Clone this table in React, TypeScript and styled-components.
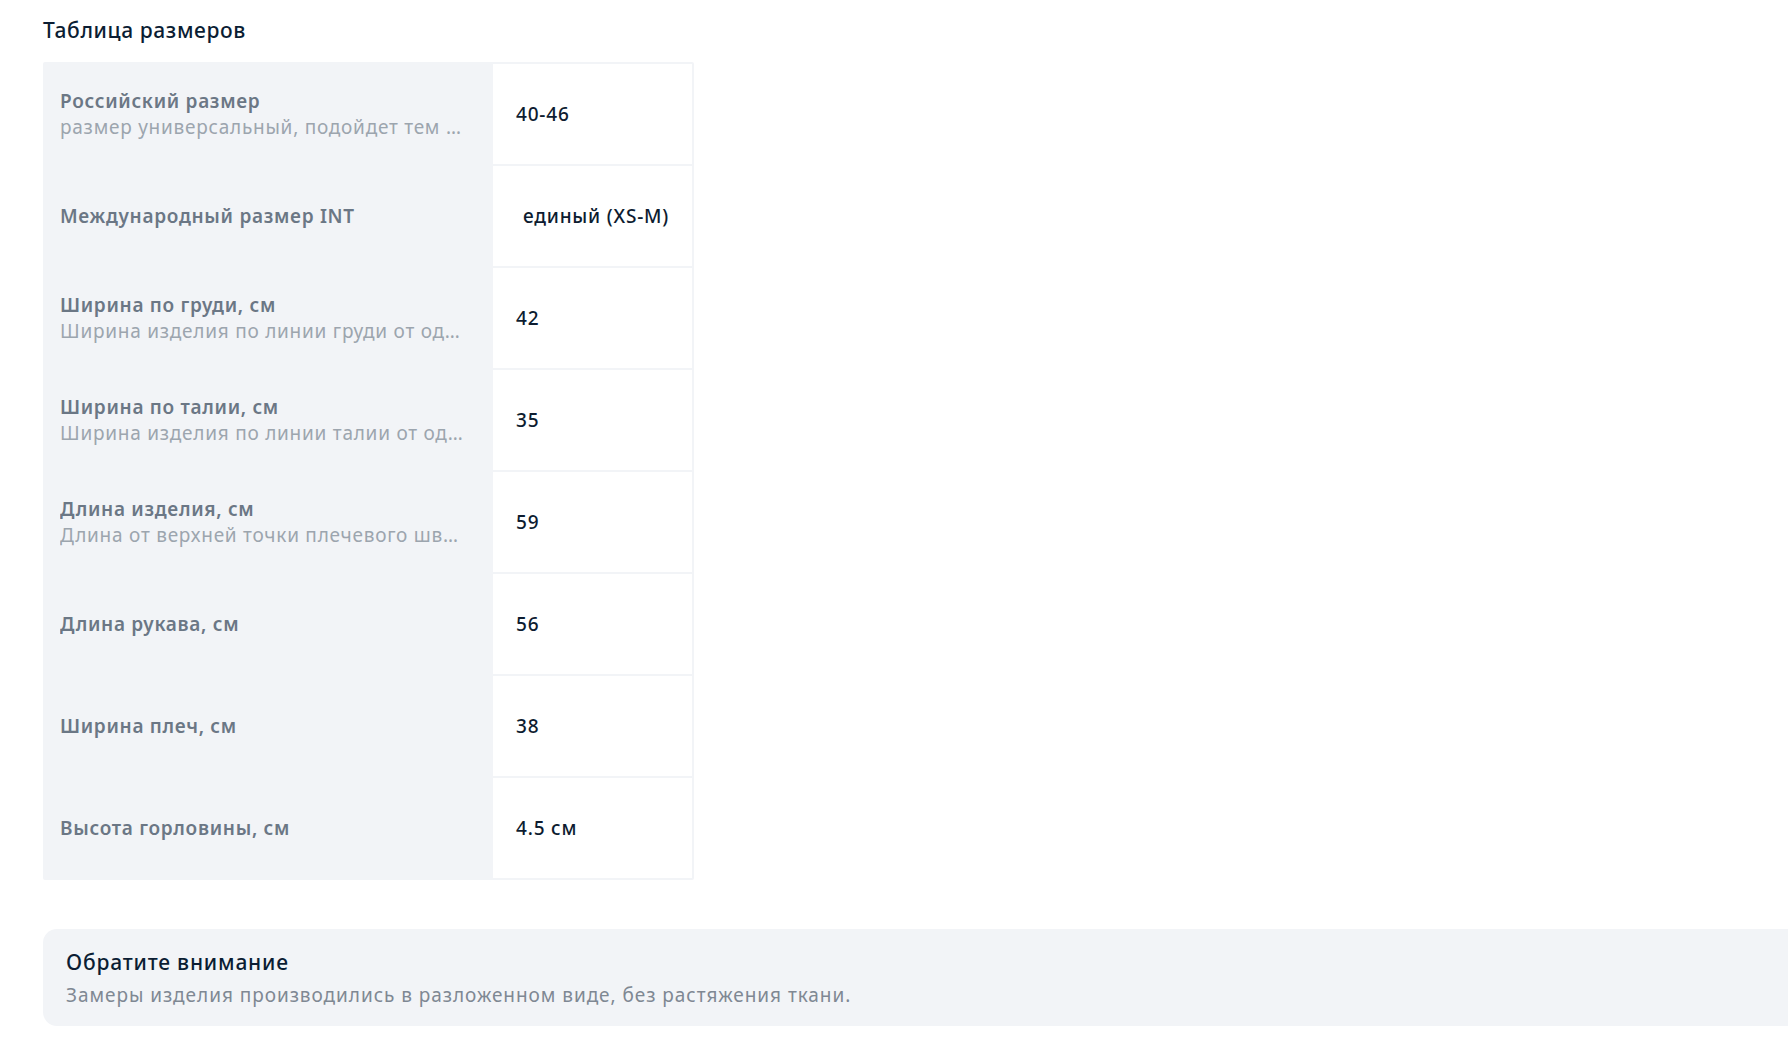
import React from "react";
import styled, { createGlobalStyle } from "styled-components";

const GlobalStyle = createGlobalStyle`
  html, body {
    margin: 0;
    padding: 0;
    background: #ffffff;
    font-family: "Noto Sans", "Open Sans", Arial, sans-serif;
    -webkit-font-smoothing: antialiased;
  }
  body { overflow: hidden; }
`;

const Page = styled.div`
  padding: 14px 0 0 43px;
  width: 1788px;
  box-sizing: border-box;
`;

const Title = styled.h2`
  margin: 0 0 16px;
  font-size: 21px;
  line-height: 32px;
  font-weight: 500;
  color: #0b1d33;
  letter-spacing: 0.6px;
`;

const Table = styled.div`
  display: grid;
  grid-template-columns: 450px 199px;
  grid-auto-rows: 100px;
  row-gap: 2px;
  width: max-content;
  padding: 2px 2px 2px 0;
  background: #f2f4f7;
  border-radius: 2px;
`;

const LabelCell = styled.div`
  display: flex;
  flex-direction: column;
  justify-content: center;
  padding: 0 24px 0 17px;
  background: #f2f4f7;
  min-width: 0;
`;

const LabelTitle = styled.div`
  font-size: 19px;
  line-height: 26px;
  font-weight: 600;
  color: #6b7785;
  letter-spacing: 0.7px;
  white-space: nowrap;
  overflow: hidden;
  text-overflow: ellipsis;
`;

const LabelHint = styled.div`
  font-size: 19px;
  line-height: 26px;
  font-weight: 400;
  color: #9ca5ae;
  white-space: nowrap;
  overflow: hidden;
  text-overflow: ellipsis;
  letter-spacing: 0.75px;
`;

const ValueCell = styled.div<{ $inset?: boolean }>`
  display: flex;
  align-items: center;
  padding-left: ${(p) => (p.$inset ? "30px" : "23px")};
  background: #ffffff;
  font-size: 19px;
  font-weight: 500;
  letter-spacing: 0.8px;
  color: #0d1c30;
  white-space: nowrap;
`;

const Notice = styled.div`
  margin-top: 49px;
  width: calc(1788px - 43px + 20px);
  box-sizing: border-box;
  background: #f2f4f7;
  border-radius: 14px;
  padding: 17px 23px 18px;
`;

const NoticeTitle = styled.div`
  font-size: 21px;
  line-height: 32px;
  font-weight: 500;
  color: #0b1d33;
  letter-spacing: 0.8px;
`;

const NoticeText = styled.div`
  margin-top: 4px;
  font-size: 19px;
  line-height: 26px;
  color: #7f8893;
  letter-spacing: 0.95px;
`;

type Row = { title: string; hint?: string; value: string; inset?: boolean };

const rows: Row[] = [
  {
    title: "Российский размер",
    hint: "размер универсальный, подойдет тем кто носит размеры 40-46",
    value: "40-46",
  },
  { title: "Международный размер INT", value: "единый (XS-M)", inset: true },
  {
    title: "Ширина по груди, см",
    hint: "Ширина изделия по линии груди от одного бокового шва до другого",
    value: "42",
  },
  {
    title: "Ширина по талии, см",
    hint: "Ширина изделия по линии талии от одного бокового шва до другого",
    value: "35",
  },
  {
    title: "Длина изделия, см",
    hint: "Длина от верхней точки плечевого шва до низа изделия",
    value: "59",
  },
  { title: "Длина рукава, см", value: "56" },
  { title: "Ширина плеч, см", value: "38" },
  { title: "Высота горловины, см", value: "4.5 см" },
];

export default function App() {
  return (
    <>
      <GlobalStyle />
      <Page>
        <Title>Таблица размеров</Title>
        <Table>
          {rows.map((r) => (
            <React.Fragment key={r.title}>
              <LabelCell>
                <LabelTitle>{r.title}</LabelTitle>
                {r.hint && <LabelHint>{r.hint}</LabelHint>}
              </LabelCell>
              <ValueCell $inset={r.inset}>{r.value}</ValueCell>
            </React.Fragment>
          ))}
        </Table>
        <Notice>
          <NoticeTitle>Обратите внимание</NoticeTitle>
          <NoticeText>
            Замеры изделия производились в разложенном виде, без растяжения ткани.
          </NoticeText>
        </Notice>
      </Page>
    </>
  );
}
